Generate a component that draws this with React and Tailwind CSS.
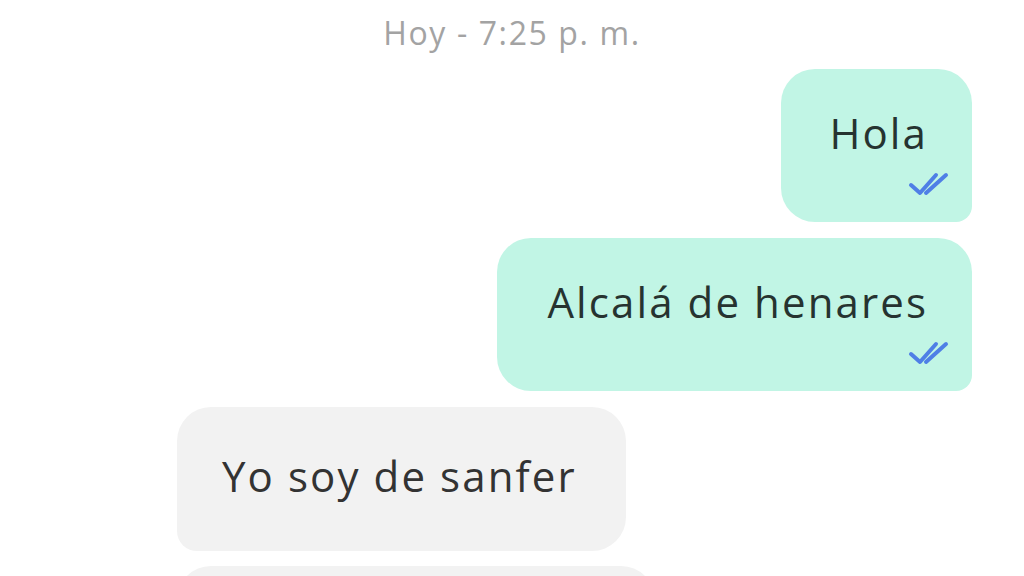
import React from "react";

const Checks = () => (
  <svg width="44" height="24" viewBox="0 0 44 24" fill="none" className="block">
    <path d="M5 13 L14 21 L30 3" stroke="#4f7fe6" strokeWidth="4" strokeLinecap="round" strokeLinejoin="round" />
    <path d="M20 21 L40 3" stroke="#4f7fe6" strokeWidth="4" strokeLinecap="round" />
  </svg>
);

const Sent = ({ text, pl }) => (
  <div className={`bg-[#c1f5e5] rounded-[34px] rounded-br-[16px] h-[153px] ${pl} pr-[44px] pt-[39px] flex flex-col items-end`}>
    <span className="text-[42px] leading-[50px] tracking-[0.05em] text-[#263330] whitespace-nowrap">{text}</span>
    <div className="mt-[14px] mr-[-22px]">
      <Checks />
    </div>
  </div>
);

export default function App() {
  return (
    <div className="w-[1024px] h-[576px] overflow-hidden bg-white font-['Open_Sans',sans-serif]">
      <div className="text-center text-[32px] leading-[40px] tracking-[0.05em] pt-[13px] text-[#a3a3a3]">
        Hoy - 7:25 p. m.
      </div>
      <div className="flex flex-col items-end gap-4 pr-[52px] mt-[16px]">
        <Sent text="Hola" pl="pl-[48px]" />
        <Sent text="Alcalá de henares" pl="pl-[50px]" />
      </div>
      <div className="flex flex-col items-start gap-[15px] pl-[177px] mt-4">
        <div className="bg-[#f2f2f2] rounded-[34px] rounded-bl-[20px] h-[144px] pl-[45px] pr-[49px] pt-[44px]">
          <span className="text-[42px] leading-[50px] tracking-[0.05em] text-[#333333] whitespace-nowrap">Yo soy de sanfer</span>
        </div>
        <div className="bg-[#f2f2f2] rounded-[34px] w-[478px] h-[144px]" />
      </div>
    </div>
  );
}
